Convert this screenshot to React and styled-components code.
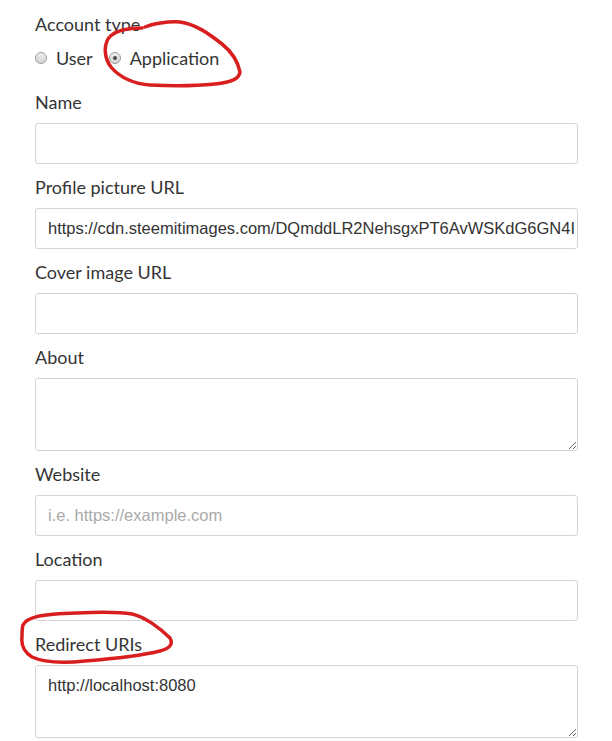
import React from 'react';
import styled, { createGlobalStyle } from 'styled-components';

const GlobalStyle = createGlobalStyle`
  body {
    margin: 0;
    background: #fff;
    font-family: Lato, "Open Sans", sans-serif;
    color: #353535;
  }
`;

const Page = styled.div`
  position: relative;
  width: 612px;
  height: 741px;
  overflow: hidden;
`;

const Form = styled.form`
  display: flex;
  flex-direction: column;
  padding: 12px 34px 0 35px;
`;

const Label = styled.label`
  display: block;
  font-size: 18px;
  line-height: 24px;
  margin-bottom: ${(props) => props.gap ?? 9}px;
`;

const RadioRow = styled.div`
  display: flex;
  align-items: center;
  height: 24px;
  margin: 10px 0 20px;
`;

const RadioOption = styled.label`
  display: flex;
  align-items: center;
  font-size: 18px;
  margin-right: 16px;
`;

const Radio = styled.input.attrs({ type: 'radio' })`
  appearance: none;
  width: 12px;
  height: 12px;
  margin: 0 9px 0 0;
  border-radius: 50%;
  border: 1px solid #9a9a9a;
  background: linear-gradient(#eeeeee, #d4d4d4);
  position: relative;
  &:checked::after {
    content: '';
    position: absolute;
    left: 3px;
    top: 3px;
    width: 4px;
    height: 4px;
    border-radius: 50%;
    background: #4a4a4a;
  }
`;

const Input = styled.input`
  box-sizing: border-box;
  width: 543px;
  height: 41px;
  padding: 0 0 0 12px;
  margin: 0 0 11px;
  border: 1px solid #d4d4d4;
  border-radius: 3px;
  font-family: "Liberation Sans", Arial, sans-serif;
  font-size: 16.5px;
  color: #333;
  outline: none;
  &::placeholder {
    color: #aaa;
  }
`;

const TextArea = styled.textarea`
  box-sizing: border-box;
  display: block;
  width: 543px;
  height: 73px;
  padding: 10px 12px;
  margin: 0 0 11px;
  border: 1px solid #d4d4d4;
  border-radius: 3px;
  font-family: "Liberation Sans", Arial, sans-serif;
  font-size: 16.5px;
  line-height: 19px;
  color: #333;
  outline: none;
`;

const Annotations = styled.svg`
  position: absolute;
  left: 0;
  top: 0;
  pointer-events: none;
`;

function App() {
  return (
    <Page>
      <GlobalStyle />
      <Form onSubmit={(e) => e.preventDefault()}>
        <Label gap={0}>Account type</Label>
        <RadioRow>
          <RadioOption>
            <Radio name="type" />
            User
          </RadioOption>
          <RadioOption>
            <Radio name="type" defaultChecked />
            Application
          </RadioOption>
        </RadioRow>

        <Label>Name</Label>
        <Input type="text" />

        <Label>Profile picture URL</Label>
        <Input
          type="text"
          defaultValue="https://cdn.steemitimages.com/DQmddLR2NehsgxPT6AvWSKdG6GN4I"
        />

        <Label>Cover image URL</Label>
        <Input type="text" />

        <Label>About</Label>
        <TextArea />

        <Label>Website</Label>
        <Input type="text" placeholder="i.e. https://example.com" />

        <Label>Location</Label>
        <Input type="text" />

        <Label>Redirect URIs</Label>
        <TextArea spellCheck={false} defaultValue="http://localhost:8080" />
      </Form>

      <Annotations width="612" height="741" viewBox="0 0 612 741">
        <path
          d="M145 27 C152 24 168 21 180 22 C195 24 208 33 222 44 C232 52 238 62 240 72 C239 79 232 82 215 84 C195 86 170 86 150 85 C135 84 120 78 111 67 C104 58 104 46 108 39 C112 33 120 30 128 29 C134 28 138 28 142 28"
          fill="none"
          stroke="#d81e1e"
          strokeWidth="3.5"
          strokeLinecap="round"
          strokeLinejoin="round"
        />
        <path
          d="M23 625 C27 617 40 614 77 613 C100 612 120 612 132 614 C145 617 160 628 170 638 C174 645 168 649 160 651 C140 656 110 659 85 661 C65 663 45 663 32 657 C24 652 21 645 22 637 C22 632 22 628 23 625"
          fill="none"
          stroke="#d81e1e"
          strokeWidth="3.5"
          strokeLinecap="round"
          strokeLinejoin="round"
        />
      </Annotations>
    </Page>
  );
}

export default App;
